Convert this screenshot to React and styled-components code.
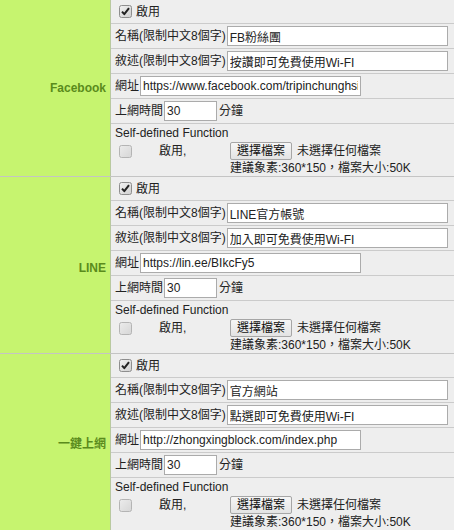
import React from 'react';
import styled, { createGlobalStyle } from 'styled-components';

const GlobalStyle = createGlobalStyle`
  body {
    margin: 0;
    background: #ffffff;
    font-family: "Liberation Sans", Arial, "Noto Sans CJK TC", sans-serif;
    font-size: 12px;
    color: #222;
  }
`;

const Page = styled.div`
  width: 454px;
`;

const Section = styled.div`
  display: flex;
  border-bottom: 1px solid #c4c4c4;
`;

const SideLabel = styled.div`
  width: 106px;
  flex-shrink: 0;
  padding-right: 4px;
  background: #c6f46f;
  border-right: 1px solid #b9c9a0;
  display: flex;
  align-items: center;
  justify-content: flex-end;
  font-weight: bold;
  font-size: 12px;
  color: #5a8b1c;
  padding-top: ${(p) => p.$shift || 0}px;
`;

const Fields = styled.div`
  flex: 1;
  background: #eeeeee;
  display: flex;
  flex-direction: column;
`;

const Row = styled.div`
  box-sizing: border-box;
  height: ${(p) => p.$h || 25}px;
  display: flex;
  align-items: center;
  padding-left: 4px;
  border-bottom: 1px solid #cbcbcb;
  line-height: 14px;
  white-space: nowrap;
`;

const Block = styled.div`
  height: 52px;
  box-sizing: border-box;
  padding: 2px 4px 0;
  line-height: 15px;
  white-space: nowrap;
`;

const Caption = styled.span`
  flex-shrink: 0;
`;

const TextBox = styled.input`
  box-sizing: border-box;
  width: ${(p) => p.$w || 221}px;
  height: 20px;
  margin: 0 1px 0 1px;
  padding: 0 2px;
  border: 1px solid #ababab;
  background: #fff;
  font-family: "Liberation Sans", Arial, "Noto Sans CJK TC", sans-serif;
  font-size: 12px;
  color: #222;
  outline: none;
`;

const Unit = styled.span`
  margin-left: 1px;
`;

const CheckWrap = styled.span`
  display: inline-flex;
  width: 13px;
  height: 13px;
  margin: 0 4px 0 4px;
  flex-shrink: 0;
`;

const UploadLine = styled.div`
  display: flex;
  align-items: flex-start;
  margin-top: 1px;
`;

const UploadLeft = styled.div`
  width: 115px;
  height: 18px;
  display: flex;
  align-items: center;
  flex-shrink: 0;
`;

const EnableText = styled.span`
  margin-left: 23px;
`;

const UploadRight = styled.div`
  display: flex;
  flex-direction: column;
`;

const FileRow = styled.div`
  display: flex;
  align-items: center;
  height: 18px;
`;

const FileButton = styled.span`
  box-sizing: border-box;
  display: inline-flex;
  align-items: center;
  justify-content: center;
  width: 62px;
  height: 18px;
  border: 1px solid #a6a6a6;
  border-radius: 2px;
  background: linear-gradient(#f6f6f6, #e3e3e3);
  color: #111;
`;

const FileStatus = styled.span`
  margin-left: 5px;
`;

const Hint = styled.div`
  line-height: 14px;
  margin-top: 1px;
`;

function Check({ checked }) {
  return (
    <CheckWrap>
      <svg width="13" height="13" viewBox="0 0 13 13">
        <defs>
          <linearGradient id={checked ? 'cg1' : 'cg2'} x1="0" y1="0" x2="1" y2="1">
            <stop offset="0" stopColor={checked ? '#f2f2f2' : '#ececec'} />
            <stop offset="1" stopColor={checked ? '#cfcfcf' : '#d6d6d6'} />
          </linearGradient>
        </defs>
        <rect
          x="0.5"
          y="0.5"
          width="12"
          height="12"
          rx="2"
          fill={`url(#${checked ? 'cg1' : 'cg2'})`}
          stroke={checked ? '#8e8e8e' : '#b4b4b4'}
        />
        {checked && (
          <path d="M3 6.6 L5.3 9.2 L10 3.2" fill="none" stroke="#222" strokeWidth="2" strokeLinejoin="round" />
        )}
      </svg>
    </CheckWrap>
  );
}

const sections = [
  {
    label: 'Facebook',
    name: 'FB粉絲團',
    desc: '按讚即可免費使用Wi-FI',
    url: 'https://www.facebook.com/tripinchunghsing',
  },
  {
    label: 'LINE',
    name: 'LINE官方帳號',
    desc: '加入即可免費使用Wi-FI',
    url: 'https://lin.ee/BIkcFy5',
    shift: 6,
  },
  {
    label: '一鍵上網',
    name: '官方網站',
    desc: '點選即可免費使用Wi-FI',
    url: 'http://zhongxingblock.com/index.php',
  },
];

export default function App() {
  return (
    <Page>
      <GlobalStyle />
      {sections.map((s) => (
        <Section key={s.label}>
          <SideLabel $shift={s.shift}>{s.label}</SideLabel>
          <Fields>
            <Row $h={24}>
              <Check checked />
              <span>啟用</span>
            </Row>
            <Row>
              <Caption>名稱(限制中文8個字)</Caption>
              <TextBox defaultValue={s.name} />
            </Row>
            <Row>
              <Caption>敘述(限制中文8個字)</Caption>
              <TextBox defaultValue={s.desc} />
            </Row>
            <Row>
              <Caption>網址</Caption>
              <TextBox defaultValue={s.url} />
            </Row>
            <Row>
              <Caption>上網時間</Caption>
              <TextBox $w={53} defaultValue="30" />
              <Unit>分鐘</Unit>
            </Row>
            <Block>
              <div>Self-defined Function</div>
              <UploadLine>
                <UploadLeft>
                  <Check />
                  <EnableText>啟用,</EnableText>
                </UploadLeft>
                <UploadRight>
                  <FileRow>
                    <FileButton>選擇檔案</FileButton>
                    <FileStatus>未選擇任何檔案</FileStatus>
                  </FileRow>
                  <Hint>建議象素:360*150，檔案大小:50K</Hint>
                </UploadRight>
              </UploadLine>
            </Block>
          </Fields>
        </Section>
      ))}
    </Page>
  );
}
